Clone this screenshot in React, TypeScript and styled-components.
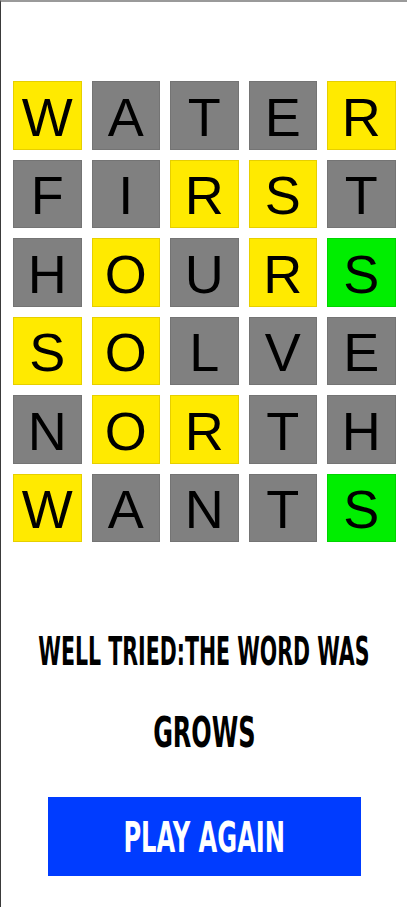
import styled, { createGlobalStyle } from "styled-components";

const GlobalStyle = createGlobalStyle`
  html, body {
    margin: 0;
    padding: 0;
    background: #ffffff;
  }
`;

type TileState = "absent" | "present" | "correct";

const tileColors: Record<TileState, { bg: string; border: string }> = {
  absent: { bg: "#808080", border: "#747474" },
  present: { bg: "#ffea00", border: "#e6cf00" },
  correct: { bg: "#00ee00", border: "#00d400" },
};

const Page = styled.div`
  box-sizing: border-box;
  min-height: 907px;
  border-left: 1px solid #3a3a3a;
  border-top: 2px solid #9a9a9a;
  display: flex;
  flex-direction: column;
  align-items: flex-start;
  overflow: hidden;
`;

const Board = styled.div`
  display: grid;
  grid-template-columns: repeat(5, 68.5px);
  grid-auto-rows: 68.5px;
  gap: 10px;
  margin: 79px 0 0 12px;
`;

const Tile = styled.div<{ $state: TileState }>`
  box-sizing: border-box;
  display: flex;
  align-items: center;
  justify-content: center;
  background: ${(p) => tileColors[p.$state].bg};
  border: 1px solid ${(p) => tileColors[p.$state].border};
  font-family: "Liberation Sans", Arial, sans-serif;
  font-size: 54px;
  color: #000;
  padding-top: 3px;
`;

const Result = styled.div`
  align-self: stretch;
  display: flex;
  flex-direction: column;
  align-items: center;
  margin-top: 89px;
`;

const Message = styled.div<{ $sx: number }>`
  font-family: "DejaVu Sans Condensed", "Liberation Sans Narrow", sans-serif;
  font-weight: 700;
  font-size: 30px;
  line-height: 42px;
  color: #000;
  white-space: nowrap;
  transform: scale(${(p) => p.$sx}, 1.32);
  text-align: center;
`;

const Word = styled(Message)`
  margin-top: 38px;
  font-size: 32px;
`;

const PlayButton = styled.button`
  align-self: flex-start;
  margin: 44px 0 0 47px;
  width: 313px;
  height: 79px;
  border: none;
  background: #003cff;
  cursor: pointer;
  display: flex;
  align-items: center;
  justify-content: center;
`;

const ButtonLabel = styled.span`
  font-family: "DejaVu Sans Condensed", "Liberation Sans Narrow", sans-serif;
  font-weight: 700;
  font-size: 32px;
  color: #fff;
  display: inline-block;
  white-space: nowrap;
  transform: scale(0.84, 1.32);
`;

const guesses: { word: string; states: TileState[] }[] = [
  { word: "WATER", states: ["present", "absent", "absent", "absent", "present"] },
  { word: "FIRST", states: ["absent", "absent", "present", "present", "absent"] },
  { word: "HOURS", states: ["absent", "present", "absent", "present", "correct"] },
  { word: "SOLVE", states: ["present", "present", "absent", "absent", "absent"] },
  { word: "NORTH", states: ["absent", "present", "present", "absent", "absent"] },
  { word: "WANTS", states: ["present", "absent", "absent", "absent", "correct"] },
];

export default function App() {
  return (
    <>
      <GlobalStyle />
      <Page>
        <Board>
          {guesses.map((g, r) =>
            g.word.split("").map((ch, c) => (
              <Tile key={`${r}-${c}`} $state={g.states[c]}>
                {ch}
              </Tile>
            ))
          )}
        </Board>
        <Result>
          <Message $sx={0.76}>WELL TRIED:THE WORD WAS</Message>
          <Word $sx={0.835}>GROWS</Word>
        </Result>
        <PlayButton>
          <ButtonLabel>PLAY AGAIN</ButtonLabel>
        </PlayButton>
      </Page>
    </>
  );
}
